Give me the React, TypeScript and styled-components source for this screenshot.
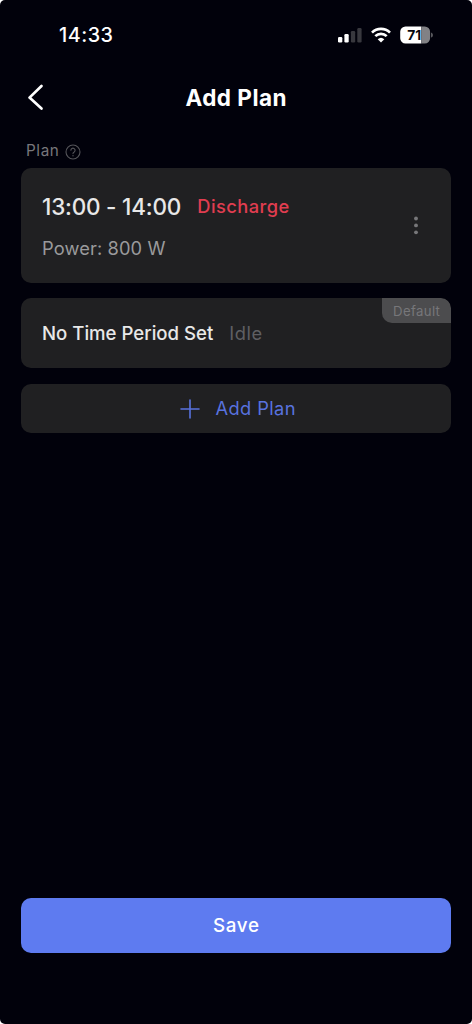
import React from "react";
import styled, { createGlobalStyle } from "styled-components";

const GlobalStyle = createGlobalStyle`
  *, *::before, *::after { box-sizing: border-box; }
  html, body { margin: 0; padding: 0; background: #fff; }
  button { border: 0; padding: 0; background: none; font: inherit; color: inherit; }
`;

const Screen = styled.main`
  display: flex;
  flex-direction: column;
  width: 472px;
  height: 1024px;
  border-radius: 5px;
  overflow: hidden;
  background: #01010b;
  color: #fff;
  font-family: Inter, "Liberation Sans", sans-serif;
`;

const StatusBar = styled.div`
  display: flex;
  justify-content: space-between;
  align-items: center;
  height: 70px;
  padding: 0 38px 0 59px;
`;

const Label = styled.span<{ $size: number; $color?: string; $weight?: number; $track?: number }>`
  margin-right: ${(p) => -(p.$track ?? 0)}px;
  font-size: ${(p) => p.$size}px;
  font-weight: ${(p) => p.$weight ?? 400};
  color: ${(p) => p.$color ?? "#fff"};
  letter-spacing: ${(p) => p.$track ?? 0}px;
  line-height: 1.2;
  white-space: nowrap;
`;

const Clock = styled(Label)`
  padding-top: 2px;
`;

const StatusIcons = styled.div`
  display: flex;
  align-items: center;
`;

const Header = styled.header`
  display: grid;
  grid-template-columns: 60px 1fr 60px;
  align-items: center;
  height: 54px;
  text-align: center;
`;

const BackButton = styled.button`
  display: flex;
  padding-left: 26px;
`;

const Content = styled.section`
  display: flex;
  flex-direction: column;
  flex: 1;
  padding: 18px 21px 0;
`;

const SectionTitle = styled.div`
  display: flex;
  align-items: center;
  gap: 6px;
  height: 19px;
  margin-bottom: 7.4px;
  padding-left: 5px;
`;

const Card = styled.div<{ $height: number }>`
  position: relative;
  display: flex;
  align-items: center;
  justify-content: space-between;
  height: ${(p) => p.$height}px;
  margin-bottom: 15.8px;
  padding: 0 21px;
  border-radius: 10px;
  overflow: hidden;
  background: #202022;
`;

const PlanInfo = styled.div`
  display: flex;
  flex-direction: column;
  gap: 18px;
  padding-top: 1px;
`;

const Row = styled.div<{ $drop?: number }>`
  display: flex;
  align-items: center;
  gap: 16px;
  padding-top: ${(p) => p.$drop ?? 0}px;
`;

const PlanMode = styled(Label)`
  padding-top: 2px;
`;

const MoreButton = styled.button`
  display: flex;
  width: 28px;
  justify-content: center;
`;

const Badge = styled.div`
  position: absolute;
  top: 0;
  right: 0;
  display: flex;
  align-items: center;
  justify-content: center;
  width: 69px;
  height: 25px;
  padding-top: 1px;
  border-radius: 0 10px 0 10px;
  background: #4c4c4e;
`;

const AddButton = styled.button`
  display: flex;
  align-items: center;
  justify-content: center;
  gap: 15px;
  height: 49.5px;
  padding: 1px 0 0 4px;
  border-radius: 10px;
  background: #202022;
`;

const SaveButton = styled.button`
  height: 55px;
  margin: 0 21px 71px;
  padding-top: 2px;
  border-radius: 10px;
  background: #5e7bf0;
`;

const SignalIcon = () => (
  <svg width="24" height="16" viewBox="0 0 24 16">
    <rect x="0" y="10" width="4.3" height="5.5" rx="1.2" fill="#fff" />
    <rect x="6.4" y="7" width="4.3" height="8.5" rx="1.2" fill="#fff" />
    <rect x="12.9" y="4" width="4.3" height="11.5" rx="1.2" fill="#38383e" />
    <rect x="19.3" y="1" width="4.3" height="14.5" rx="1.2" fill="#38383e" />
  </svg>
);

const WifiSvg = styled.svg`
  margin-left: 8.7px;
`;

const WifiIcon = () => (
  <WifiSvg width="20" height="16" viewBox="0 0 20 16">
    <g fill="none" stroke="#fff" strokeWidth="2.7">
      <path d="M1 5.6a12.9 12.9 0 0 1 18 0" />
      <path d="M4.3 9.1a8.2 8.2 0 0 1 11.4 0" />
    </g>
    <path d="M6.7 12.2a4.8 4.8 0 0 1 6.6 0L10 15.5z" fill="#fff" />
  </WifiSvg>
);

const BatterySvg = styled.svg`
  margin-left: 9px;
`;

const BatteryIcon = () => (
  <BatterySvg width="34" height="18" viewBox="0 0 34 18">
    <path d="M5.5 .5H21.3v17H5.5a5.3 5.3 0 0 1-5.3-5.3V5.8A5.3 5.3 0 0 1 5.5 .5z" fill="#fff" />
    <path d="M21.3 .5h3.5a5.3 5.3 0 0 1 5.3 5.3v6.4a5.3 5.3 0 0 1-5.3 5.3h-3.5z" fill="#818185" />
    <path d="M31.3 6.4c1.8.8 1.8 4.4 0 5.2z" fill="#818185" />
    <text x="14.2" y="13.9" textAnchor="middle" fontFamily="Inter, sans-serif" fontSize="13.8" fontWeight="700" fill="#08080f">71</text>
  </BatterySvg>
);

export default function App() {
  return (
    <>
      <GlobalStyle />
      <Screen>
        <StatusBar>
          <Clock $size={19.8} $weight={500} $track={0.5}>14:33</Clock>
          <StatusIcons>
            <SignalIcon />
            <WifiIcon />
            <BatteryIcon />
          </StatusIcons>
        </StatusBar>
        <Header>
          <BackButton aria-label="Back">
            <svg width="20" height="28" viewBox="0 0 20 28" fill="none" stroke="#fff" strokeWidth="2.7" strokeLinecap="round" strokeLinejoin="round">
              <path d="M15.5 3L3.5 14.6 15.5 25.6" />
            </svg>
          </BackButton>
          <Label $size={22.5} $weight={700} $track={0.5}>Add Plan</Label>
        </Header>
        <Content>
          <SectionTitle>
            <Label $size={15.3} $color="#77777b" $track={0.6}>Plan</Label>
            <svg width="16" height="16" viewBox="0 0 16 16" fill="none" stroke="#55555a" strokeWidth="1.1" strokeLinecap="round">
              <circle cx="8" cy="8" r="7" />
              <path d="M5.9 6.3a2.1 2.1 0 1 1 3.3 1.7C8.4 8.5 8 8.8 8 9.6" />
              <path d="M8 11.6v.2" strokeWidth="1.3" />
            </svg>
          </SectionTitle>
          <Card $height={114.3}>
            <PlanInfo>
              <Row>
                <Label $size={22.5} $weight={500} $color="#e8e8e8" $track={-0.2}>13:00 - 14:00</Label>
                <PlanMode $size={18.3} $weight={500} $color="#e03d50" $track={0.45}>Discharge</PlanMode>
              </Row>
              <Label $size={18.3} $color="#9a9a9c" $track={0.1}>Power: 800 W</Label>
            </PlanInfo>
            <MoreButton aria-label="More">
              <svg width="6" height="20" viewBox="0 0 6 20" fill="#77777a">
                <circle cx="3" cy="2.5" r="1.9" />
                <circle cx="3" cy="9.4" r="1.9" />
                <circle cx="3" cy="16.3" r="1.9" />
              </svg>
            </MoreButton>
          </Card>
          <Card $height={69.3}>
            <Row $drop={1}>
              <Label $size={18.6} $weight={500} $color="#e8e8e8">No Time Period Set</Label>
              <Label $size={18.3} $color="#5f5f62" $track={0.6}>Idle</Label>
            </Row>
            <Badge>
              <Label $size={13.2} $color="#77777a" $track={0.35}>Default</Label>
            </Badge>
          </Card>
          <AddButton>
            <svg width="20" height="20" viewBox="0 0 20 20" stroke="#5872df" strokeWidth="1.6" strokeLinecap="round">
              <path d="M10 1v18M1 10h18" />
            </svg>
            <Label $size={18.3} $color="#5872df" $track={0.4}>Add Plan</Label>
          </AddButton>
        </Content>
        <SaveButton>
          <Label $size={18.8} $weight={500} $track={0.7}>Save</Label>
        </SaveButton>
      </Screen>
    </>
  );
}
